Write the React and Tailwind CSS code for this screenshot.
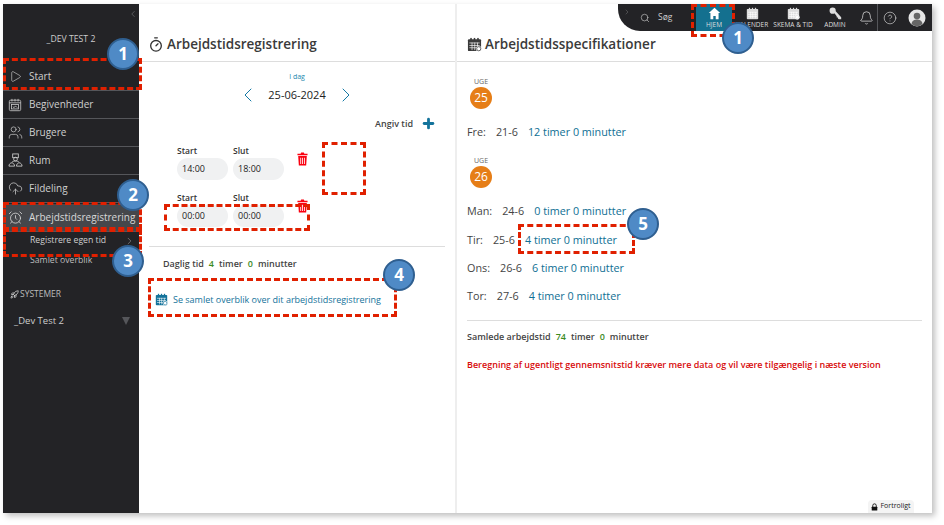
import { Play, Users, CloudUpload, AlarmClock, ChevronLeft, ChevronRight, Search, Bell, Rocket, Timer, Plus, CircleHelp } from 'lucide-react';

function CalIcon({ className, clock }) {
  return (
    <svg viewBox="0 0 16 16" className={className} fill="currentColor">
      <rect x="1" y="2.5" width="14" height="12.5" rx="1" />
      <rect x="3.5" y="1" width="1.6" height="3" />
      <rect x="7.2" y="1" width="1.6" height="3" />
      <rect x="10.9" y="1" width="1.6" height="3" />
      <g fill="#fff">
        <rect x="2.5" y="6" width="11" height="0.7" />
        <rect x="2.5" y="8.6" width="11" height="0.7" />
        <rect x="2.5" y="11.2" width="11" height="0.7" />
        <rect x="5" y="6" width="0.7" height="8" />
        <rect x="8" y="6" width="0.7" height="8" />
        <rect x="11" y="6" width="0.7" height="8" />
      </g>
      {clock && <circle cx="12.5" cy="12.5" r="3" fill="#fff" />}
      {clock && <circle cx="12.5" cy="12.5" r="2.2" fill="none" stroke="currentColor" strokeWidth="0.8" />}
    </svg>
  );
}

function EventIcon() {
  return (
    <svg viewBox="0 0 16 16" className="w-[14px] h-[14px]" fill="none" stroke="currentColor" strokeWidth="0.9">
      <rect x="1.500" y="2.500" width="13" height="12" rx="1.500" />
      <path d="M4.500 1v3M8 1v3M11.500 1v3M1.500 5.500h13" />
      <rect x="4" y="7.500" width="8" height="5" />
      <path d="M5.500 10l1.500 1 1.500-2 2 2" />
    </svg>
  );
}

function RoomIcon() {
  return (
    <svg viewBox="0 0 16 16" className="w-[15px] h-[15px]" fill="none" stroke="currentColor" strokeWidth="0.9">
      <rect x="5" y="1" width="6" height="4" />
      <circle cx="8" cy="6.5" r="2" />
      <path d="M1 14c0-2 1.5-3.5 3-3.5s3 1.500 3 3.500zM9 14c0-2 1.500-3.500 3-3.500s3 1.500 3 3.500z" />
      <path d="M4 10c1-1 2-1.500 4-1.500s3 .5 4 1.500" />
    </svg>
  );
}

function TrashIcon({ className }) {
  return (
    <svg viewBox="0 0 12 14" className={className} fill="currentColor">
      <path d="M4.500 0h3l.5 1.200h3.500V3H.500V1.200H4z" />
      <path d="M1.300 3.800h9.400L10 14H2zM3.600 5.500v7h.9v-7zm2 0v7h.9v-7zm2 0v7h.9v-7z" fillRule="evenodd" />
    </svg>
  );
}

function LockIcon() {
  return (
    <svg viewBox="0 0 10 10" className="w-[7px] h-[8px]">
      <path d="M2.500 5V3a2.500 2.500 0 0 1 5 0v2" fill="none" stroke="#111" strokeWidth="1.300" />
      <rect x="1" y="4.500" width="8" height="5.500" rx="0.800" fill="#111" />
    </svg>
  );
}

function NavRow({ icon, label, active, className = '' }) {
  return (
    <div className={`flex items-center h-[28px] pl-[3px] gap-[5px] border-b border-[#55565a] text-[10px] ${active ? 'bg-[#45474b] text-[#d8d8d8]' : 'text-[#cfcfcf]'} ${className}`}>
      <span className="w-[18px] flex justify-center shrink-0">{icon}</span>
      <span className="whitespace-nowrap">{label}</span>
    </div>
  );
}

function TimeField({ label, value }) {
  return (
    <div className="w-[51px]">
      <div className="text-[8.5px] font-semibold text-[#333] leading-[14px] h-[13px]">{label}</div>
      <div className="mt-[1px] h-[22px] rounded-full bg-[#f0f1f2] flex items-center pl-[5px] text-[9px] text-[#222]">{value}</div>
    </div>
  );
}

function TimeRow({ start, end }) {
  return (
    <div className="flex items-start">
      <div className="flex gap-[5px]">
        <TimeField label="Start" value={start} />
        <TimeField label="Slut" value={end} />
      </div>
      <TrashIcon className="w-[11px] h-[14px] ml-[13px] mt-[8px] text-[#fa0010]" />
    </div>
  );
}

function DayRow({ day, date, value, className }) {
  return (
    <div className={`flex items-center h-[16px] pl-[10px] text-[10.8px] text-[#444] whitespace-nowrap ${className}`}>
      <span>{day}</span>
      <span className="ml-[10px]">{date}</span>
      <a className="ml-[10px] text-[#0f6f94]">{value}</a>
    </div>
  );
}

function Week({ num }) {
  return (
    <div className="w-[22px] flex flex-col items-center">
      <span className="text-[7px] leading-[8px] text-[#666]">UGE</span>
      <span className="mt-[1px] w-[22px] h-[22px] rounded-full bg-[#e67e17] text-white text-[12px] flex items-center justify-center">{num}</span>
    </div>
  );
}

function Badge({ n, className }) {
  return (
    <div className={`absolute w-[32px] h-[32px] rounded-full bg-[#4f8ac6] border-2 border-[#2f5f90] text-white font-bold text-[17px] flex items-center justify-center ${className}`}>
      {n}
    </div>
  );
}

function Dash({ className }) {
  return <div className={`absolute border-[3px] border-dashed border-[#e02000] ${className}`} />;
}

function TopItem({ icon, label, className = '' }) {
  return (
    <div className={`flex flex-col items-center justify-end pb-[2px] text-[6.500px] leading-[8px] text-[#ddd] whitespace-nowrap ${className}`}>
      {icon}
      <span className="mt-[1px]">{label}</span>
    </div>
  );
}

export default function App() {
  return (
    <div className="w-[944px] h-[525px] bg-white pt-[4px] pl-[3px] overflow-hidden font-['Open_Sans',sans-serif]">
      <div className="relative w-[929px] h-[509px] bg-white flex shadow-[3px_3px_6px_rgba(0,0,0,0.25)]">
        {/* sidebar */}
        <aside className="w-[136px] shrink-0 h-full bg-[#232326] flex flex-col">
          <div className="h-[59px] relative flex items-end justify-center pb-[17px] text-[8.700px] text-[#ccc]">
            <ChevronLeft className="absolute top-[4px] right-[1px] w-[10px] h-[12px] text-[#77787c]" strokeWidth={1.5} />
            _DEV TEST 2
          </div>
          <NavRow icon={<Play className="w-[13px] h-[15px]" strokeWidth={1.2} />} label="Start" />
          <NavRow icon={<EventIcon />} label="Begivenheder" />
          <NavRow icon={<Users className="w-[15px] h-[15px]" strokeWidth={1.1} />} label="Brugere" />
          <NavRow icon={<RoomIcon />} label="Rum" />
          <NavRow icon={<CloudUpload className="w-[15px] h-[15px]" strokeWidth={1.2} />} label="Fildeling" />
          <NavRow icon={<AlarmClock className="w-[15px] h-[15px]" strokeWidth={1.3} />} label="Arbejdstidsregistrering" active className="mt-[1px]" />
          <div className="flex items-center justify-between h-[18px] pl-[27px] pr-[4px] text-[8.700px] text-[#cfcfcf]">
            Registrere egen tid
            <ChevronRight className="w-[11px] h-[14px] text-[#999]" strokeWidth={1.3} />
          </div>
          <div className="h-[21px] pl-[27px] text-[8.700px] leading-[21px] text-[#bbb]">Samlet overblik</div>
          <div className="mt-[17px] pl-[7px] flex items-center gap-[1px] text-[8.500px] text-[#bbb]">
            <Rocket className="w-[9px] h-[9px] text-[#ccc]" strokeWidth={2.2} />
            SYSTEMER
          </div>
          <div className="mt-[13px] pl-[11px] pr-[9px] flex items-center justify-between text-[9.500px] text-[#ccc]">
            _Dev Test 2
            <span className="w-0 h-0 border-x-[4px] border-x-transparent border-t-[8px] border-t-[#55565a]" />
          </div>
        </aside>

        {/* left panel */}
        <section className="w-[318px] shrink-0 border-r-2 border-[#eeeeee] flex flex-col">
          <header className="h-[58px] border-b border-[#dddddd] flex items-end pb-[7px] pl-[9px] gap-[3px]">
            <Timer className="w-[16px] h-[17px] mb-[1px] text-[#333]" strokeWidth={2} />
            <h1 className="text-[13.500px] leading-[19px] font-semibold text-[#3a3a3a]">Arbejdstidsregistrering</h1>
          </header>
          <div className="mt-[10px] text-center text-[7px] leading-[10px] text-[#1a88ae]">I dag</div>
          <div className="mt-[1px] flex items-center justify-center gap-[8px] text-[11px] text-[#222]">
            <ChevronLeft className="w-[24px] h-[24px] text-[#1479a5]" strokeWidth={1} />
            <span className="w-[58px] text-center whitespace-nowrap">25-06-2024</span>
            <ChevronRight className="w-[24px] h-[24px] text-[#1479a5]" strokeWidth={1} />
          </div>
          <div className="mt-[9px] flex items-center justify-end pr-[19px] gap-[8px] text-[9px] font-semibold text-[#444]">
            Angiv tid
            <Plus className="w-[15px] h-[15px] text-[#14739b]" strokeWidth={4.5} />
          </div>
          <div className="mt-[13px] pl-[38px] flex flex-col gap-[11px]">
            <TimeRow start="14:00" end="18:00" />
            <TimeRow start="00:00" end="00:00" />
          </div>
          <div className="mx-[10px] mt-[19px] border-t border-[#dddddd]" />
          <div className="mt-[11px] pl-[24px] flex gap-[5px] text-[9px] leading-[12px] font-semibold text-[#444]">
            Daglig tid <span className="text-[#3d8b1f]">4</span> timer <span className="text-[#3d8b1f]">0</span> minutter
          </div>
          <div className="mt-[23px] pl-[16px] flex items-center gap-[5px] text-[9px] text-[#14739b] whitespace-nowrap">
            <CalIcon clock className="w-[13px] h-[13px]" />
            Se samlet overblik over dit arbejdstidsregistrering
          </div>
        </section>

        {/* right panel */}
        <section className="flex-1 flex flex-col">
          <header className="h-[58px] border-b border-[#dddddd] flex items-end pb-[7px] pl-[10px] gap-[3px]">
            <CalIcon clock className="w-[15px] h-[15px] mb-[2px] text-[#3a3a3a]" />
            <h1 className="text-[13.500px] leading-[19px] font-semibold text-[#3a3a3a]">Arbejdstidsspecifikationer</h1>
          </header>
          <div className="pl-[13px] mt-[16px]"><Week num="25" /></div>
          <DayRow className="mt-[15px]" day="Fre:" date="21-6" value="12 timer 0 minutter" />
          <div className="pl-[13px] mt-[17px]"><Week num="26" /></div>
          <DayRow className="mt-[15px]" day="Man:" date="24-6" value="0 timer 0 minutter" />
          <DayRow className="mt-[13px]" day="Tir:" date="25-6" value="4 timer 0 minutter" />
          <DayRow className="mt-[12px]" day="Ons:" date="26-6" value="6 timer 0 minutter" />
          <DayRow className="mt-[12px]" day="Tor:" date="27-6" value="4 timer 0 minutter" />
          <div className="mx-[10px] mt-[16px] border-t border-[#dddddd]" />
          <div className="mt-[10px] pl-[10px] flex gap-[5px] text-[9px] leading-[12px] font-semibold text-[#444]">
            Samlede arbejdstid <span className="text-[#3d8b1f]">74</span> timer <span className="text-[#3d8b1f]">0</span> minutter
          </div>
          <p className="mt-[16px] pl-[10px] text-[9px] leading-[12px] font-semibold text-[#d80c0c]">
            Beregning af ugentligt gennemsnitstid kræver mere data og vil være tilgængelig i næste version
          </p>
        </section>

        {/* top bar */}
        <div className="absolute top-0 right-0 w-[314px] h-[27px] bg-[#232326] rounded-bl-[22px] flex items-stretch">
          <ChevronRight className="absolute left-[5px] top-[3px] w-[8px] h-[10px] text-[#777]" strokeWidth={1.5} />
          <div className="flex items-center gap-[8px] ml-[22px] w-[56px] text-[8.500px] text-[#ccc]">
            <Search className="w-[10px] h-[10px]" strokeWidth={1.5} />
            Søg
          </div>
          <TopItem
            className="w-[36px] bg-[#14708f]"
            icon={<svg viewBox="0 0 16 16" className="w-[13px] h-[13px] text-white" fill="currentColor"><path d="M8 1 1 7.500h2V15h3.500v-4h3v4H13V7.500h2z" /></svg>}
            label="HJEM"
          />
          <TopItem className="w-[40px]" icon={<CalIcon className="w-[13px] h-[13px] text-[#ddd]" />} label="KALENDER" />
          <TopItem className="w-[42px]" icon={<CalIcon clock className="w-[13px] h-[13px] text-[#ddd]" />} label="SKEMA & TID" />
          <TopItem
            className="w-[42px]"
            icon={<svg viewBox="0 0 16 16" className="w-[13px] h-[13px] text-[#ddd]" fill="currentColor"><circle cx="4.500" cy="4.500" r="3.800" /><path d="M6 6.800 8 5l7 7.500V15h-3l-1-1v-1H9.500v-1.500z" /></svg>}
            label="ADMIN"
          />
          <div className="w-[22px] flex items-center justify-center border-r border-[#55565a]">
            <Bell className="w-[15px] h-[16px] text-[#ddd]" strokeWidth={1.2} />
          </div>
          <div className="w-[24px] flex items-center justify-center">
            <CircleHelp className="w-[14px] h-[14px] text-[#ddd]" strokeWidth={1.1} />
          </div>
          <div className="flex-1 flex items-center justify-center">
            <svg viewBox="0 0 18 18" className="w-[18px] h-[18px]">
              <circle cx="9" cy="9" r="8.500" fill="#e6e6e6" />
              <circle cx="9" cy="7" r="3.300" fill="#666" />
              <path d="M3.500 15c.5-3.500 3-4.500 5.500-4.500s5 1 5.500 4.500a8 8 0 0 1-11 0z" fill="#666" />
            </svg>
          </div>
        </div>

        {/* confidentiality tab */}
        <div className="absolute bottom-0 left-[865px] w-[46px] h-[13px] bg-[#f4f4f4] rounded-t-[4px] flex items-center justify-center gap-[2px] text-[7px] text-[#222]">
          <LockIcon />
          Fortroligt
        </div>

        {/* guide annotations */}
        <Dash className="left-0 top-[54px] w-[139px] h-[32px]" />
        <Dash className="left-0 top-[198px] w-[139px] h-[28px]" />
        <Dash className="left-0 top-[225px] w-[139px] h-[28px]" />
        <Dash className="left-[145px] top-[274px] w-[249px] h-[39px]" />
        <Dash className="left-[319px] top-[138px] w-[44px] h-[53px]" />
        <Dash className="left-[161px] top-[200px] w-[146px] h-[27px]" />
        <Dash className="left-[515px] top-[220px] w-[117px] h-[30px]" />
        <Dash className="left-[688px] top-0 w-[44px] h-[33px]" />
        <Badge n="1" className="left-[104px] top-[34px]" />
        <Badge n="2" className="left-[114px] top-[175px]" />
        <Badge n="3" className="left-[109px] top-[241px]" />
        <Badge n="4" className="left-[380px] top-[255px]" />
        <Badge n="5" className="left-[624px] top-[204px]" />
        <Badge n="1" className="left-[719px] top-[18px]" />
      </div>
    </div>
  );
}
